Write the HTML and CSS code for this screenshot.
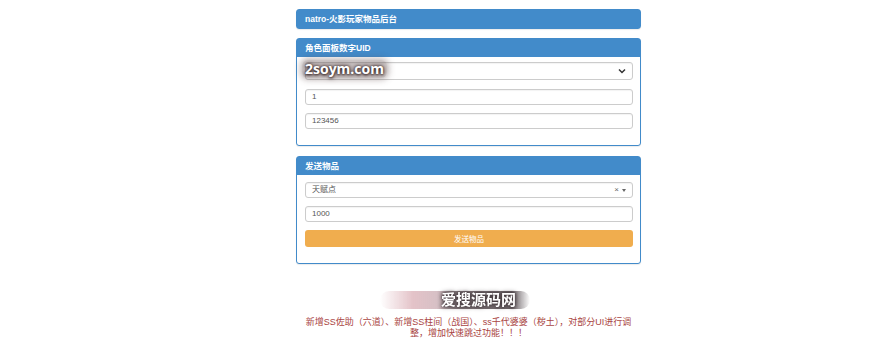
FILE: index.html
```html
<!DOCTYPE html>
<html lang="zh-CN">
<head>
  <meta charset="UTF-8">
  <title>natro-火影玩家物品后台</title>
  <link rel="stylesheet" href="styles.css">
</head>
<body>
  <div class="wrap">
    <div class="panel top">
      <div class="panel-heading">natro-火影玩家物品后台</div>
    </div>

    <div class="panel">
      <div class="panel-heading">角色面板数字UID</div>
      <div class="panel-body first">
        <div class="control select">
          <span></span>
          <svg class="chev" width="8" height="6" viewBox="0 0 8 6"><path d="M1 1.5 L4 4.5 L7 1.5" fill="none" stroke="#333" stroke-width="1.5"/></svg>
        </div>
        <div class="control">1</div>
        <div class="control last">123456</div>
        <div class="mark">2soym.com</div>
      </div>
    </div>

    <div class="panel">
      <div class="panel-heading">发送物品</div>
      <div class="panel-body second">
        <div class="control select2">
          <span>天赋点</span>
          <span class="tools">×<i class="caret"></i></span>
        </div>
        <div class="control">1000</div>
        <button class="btn">发送物品</button>
      </div>
    </div>

    <div class="notice">
      <div class="stamp"><span>爱搜源码网</span></div>
      <p>新增SS佐助（六道）、新增SS柱间（战国）、ss千代婆婆（秽土），对部分UI进行调整，增加快速跳过功能！！！</p>
    </div>
  </div>
</body>
</html>
```

FILE: styles.css
```css
body { margin: 0; background: #fff; font-family: "Liberation Sans", "Noto Sans CJK SC", sans-serif; color: #555; }
.wrap { width: 345px; margin-left: 296px; padding-top: 9px; }
.panel { border: 1px solid #428bca; border-radius: 3px; margin-bottom: 10px; background: #fff; box-shadow: 0 1px 1px rgba(0,0,0,.08); }
.panel.top { margin-bottom: 9px; }
.panel-heading { background: #428bca; color: #fff; height: 18px; line-height: 18px; padding: 0 8px; font-size: 8.5px; font-weight: bold; }
.panel-body { position: relative; padding: 0 7px 0 8px; }
.panel-body.first { padding-top: 5px; padding-bottom: 16px; }
.panel-body.second { padding-top: 7px; padding-bottom: 16px; }
.control { box-sizing: border-box; height: 16px; line-height: 14px; border: 1px solid #ccc; border-radius: 3px; padding: 0 6px; font-size: 8px; color: #555; margin-bottom: 8px; box-shadow: inset 0 1px 1px rgba(0,0,0,.05); }
.control.last { margin-bottom: 0; }
.control.select { height: 18px; display: flex; justify-content: space-between; align-items: center; margin-bottom: 9px; }
.control.select2 { display: flex; justify-content: space-between; align-items: center; }
.tools { color: #666; font-size: 8px; display: flex; align-items: center; gap: 3px; }
.caret { display: inline-block; border-left: 2px solid transparent; border-right: 2px solid transparent; border-top: 3px solid #666; }
.btn { display: block; width: 100%; height: 17px; border: none; border-radius: 3px; background: #f0ad4e; color: #fff; font-size: 7.5px; font-family: inherit; padding: 0; }
.mark { position: absolute; left: 5px; top: 3px; padding: 0 3px; font-family: "Open Sans", sans-serif; font-weight: bold; font-size: 14px; line-height: 18px; color: #fff; text-shadow: 0 0 3px #3a2a2a, 0 0 6px #5a4040, 0 1px 3px #2a1a1a; background: rgba(90,70,70,.3); border-radius: 6px; box-shadow: 0 0 6px 2px rgba(90,70,70,.35); }
.notice { position: relative; padding-top: 43px; text-align: center; }
.notice p { margin: 0; font-size: 9px; line-height: 11px; color: #a94442; padding: 0 6px; }
.stamp { position: absolute; left: 84px; top: 17px; width: 150px; height: 18px; background: linear-gradient(90deg, rgba(220,160,170,0) 0%, rgba(205,145,155,.55) 22%, rgba(175,130,140,.5) 38%, rgba(90,75,80,.75) 50%, rgba(70,60,65,.8) 88%, rgba(120,110,115,0) 100%); border-radius: 9px; filter: blur(0.6px); }
.stamp span { position: absolute; left: 61px; top: 0; font-weight: bold; font-size: 15px; line-height: 18px; color: #fff; text-shadow: 0 0 3px #3a3035, 0 0 5px #3a3035; }
```
